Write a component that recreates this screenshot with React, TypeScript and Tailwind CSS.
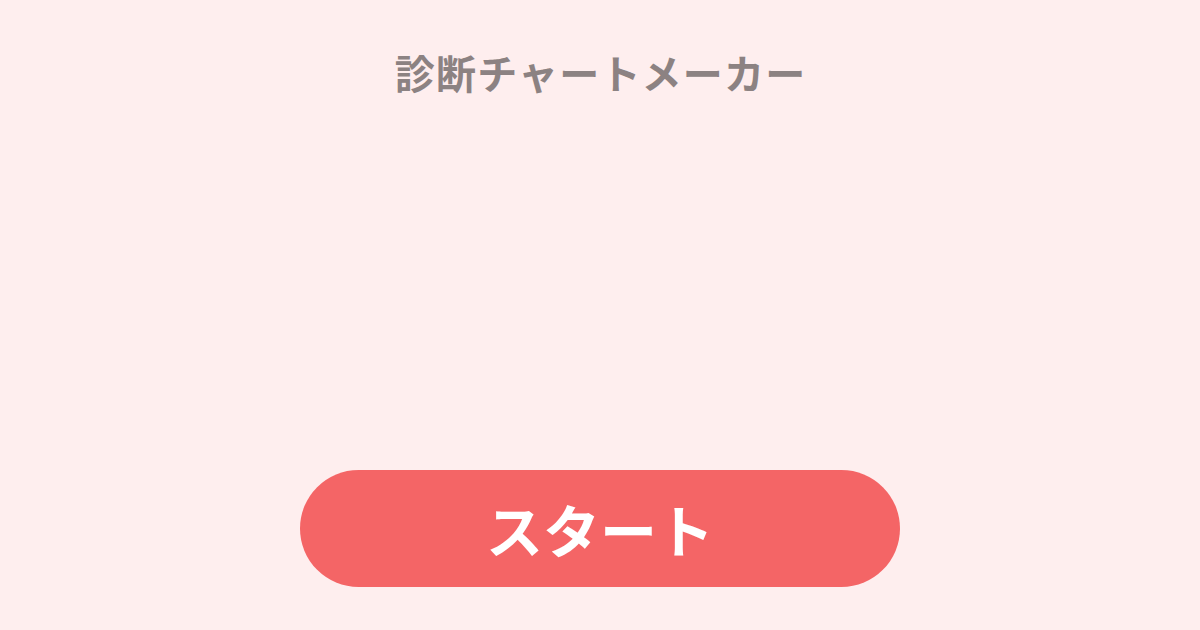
export default function App() {
  return (
    <div
      className="w-[1200px] h-[630px] bg-[#feeeee] flex flex-col items-center"
      style={{ fontFamily: '"Noto Sans CJK JP", "Noto Sans", sans-serif' }}
    >
      <h1 className="mt-[44px] text-[40px] leading-[56px] font-bold tracking-[0.03em] text-[#8c8282] pl-[0.03em]">
        診断チャートメーカー
      </h1>
      <div className="flex-1" />
      <button className="mb-[43px] w-[600px] h-[117px] rounded-full bg-[#f46566] text-white text-[57px] font-bold leading-none flex items-center justify-center">
        スタート
      </button>
    </div>
  );
}
